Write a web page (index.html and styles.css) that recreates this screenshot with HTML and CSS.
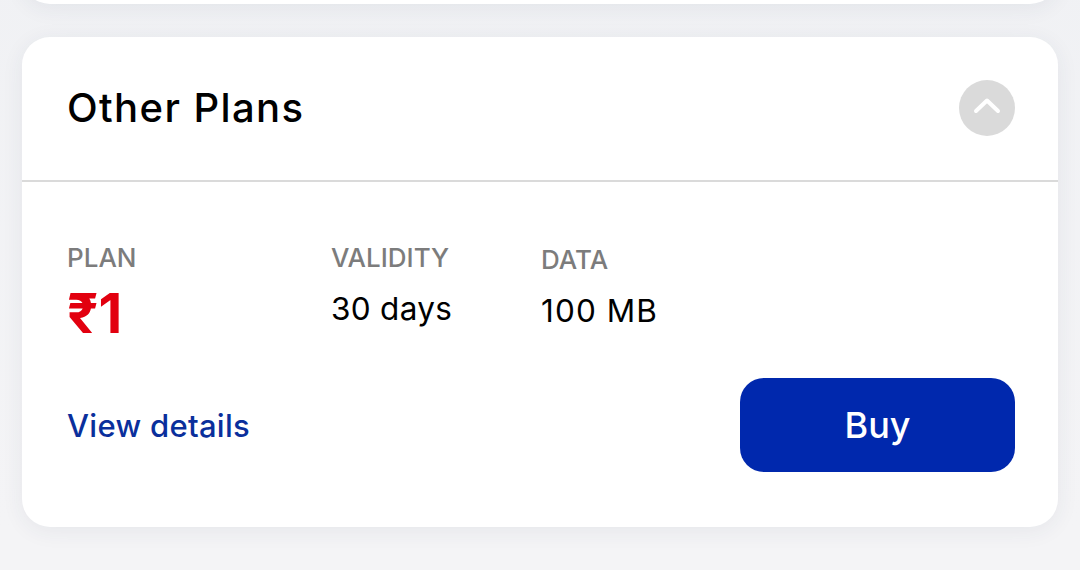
FILE: index.html
```html
<!DOCTYPE html>
<html lang="en">
<head>
<meta charset="utf-8">
<title>Other Plans</title>
<link rel="stylesheet" href="styles.css">
</head>
<body>
<div class="page">
  <div class="card card-prev"></div>
  <section class="card plans">
    <header class="plans-head">
      <h2 class="plans-title">Other Plans</h2>
      <button class="collapse-btn" aria-label="Collapse">
        <svg width="30" height="18" viewBox="0 0 30 18" fill="none">
          <path d="M4 14 L15 3.5 L26 14" stroke="#ffffff" stroke-width="4" stroke-linecap="round" stroke-linejoin="round"/>
        </svg>
      </button>
    </header>
    <div class="plans-body">
      <div class="plan-row">
        <div class="col col-plan">
          <div class="label">PLAN</div>
          <div class="price">₹1</div>
        </div>
        <div class="col col-validity">
          <div class="label">VALIDITY</div>
          <div class="value">30 days</div>
        </div>
        <div class="col col-data">
          <div class="label">DATA</div>
          <div class="value value-wide">100 MB</div>
        </div>
      </div>
      <div class="plan-actions">
        <a class="details-link" href="#">View details</a>
        <button class="buy-btn">Buy</button>
      </div>
    </div>
  </section>
</div>
</body>
</html>
```

FILE: styles.css
```css
* { box-sizing: border-box; }
html, body { margin: 0; padding: 0; }
body {
  background: #f4f4f6;
  font-family: Inter, Roboto, "Noto Sans", "DejaVu Sans", sans-serif;
  color: #000;
  width: 1080px;
  height: 570px;
  overflow: hidden;
}
.page {
  display: flex;
  flex-direction: column;
  align-items: center;
  gap: 33px;
  margin-top: -60px;
  background: linear-gradient(#f0f1f4, #f4f4f6);
}
.card {
  width: 1036px;
  background: #fff;
  border-radius: 28px;
  box-shadow: 0 4px 22px rgba(40, 50, 90, 0.07);
}
.card-prev {
  height: 64px;
}
.plans-head {
  height: 145px;
  display: flex;
  align-items: center;
  justify-content: space-between;
  padding: 0 43px 2px 45px;
  border-bottom: 2px solid #dadada;
}
.plans-title {
  margin: 0;
  font-size: 40px;
  font-weight: 500;
  letter-spacing: 1.4px;
}
.collapse-btn {
  width: 56px;
  height: 56px;
  border-radius: 50%;
  border: none;
  background: #dadada;
  display: flex;
  align-items: center;
  justify-content: center;
  padding: 0 0 3px 0;
}
.plans-body {
  padding: 61px 43px 55px 45px;
}
.plan-row {
  display: flex;
}
.col-plan { width: 264px; }
.col-validity { width: 210px; }
.col-data { padding-top: 2px; }
.label {
  font-size: 26px;
  line-height: 30px;
  font-weight: 500;
  color: #7c7c7c;
}
.price {
  font-size: 55px;
  line-height: 50px;
  font-weight: 700;
  color: #e2000f;
  margin-top: 15px;
}
.value {
  font-size: 31.5px;
  line-height: 40px;
  margin-top: 16px;
  letter-spacing: 0.3px;
}
.value-wide {
  letter-spacing: 1.1px;
}
.plan-actions {
  display: flex;
  align-items: center;
  justify-content: space-between;
  margin-top: 40px;
}
.details-link {
  font-size: 31px;
  font-weight: 500;
  color: #0a2f9c;
  text-decoration: none;
  letter-spacing: 0.3px;
}
.buy-btn {
  width: 275px;
  height: 94px;
  border: none;
  border-radius: 24px;
  background: #0028ad;
  color: #fff;
  font-family: inherit;
  font-size: 36px;
  font-weight: 500;
}
```
